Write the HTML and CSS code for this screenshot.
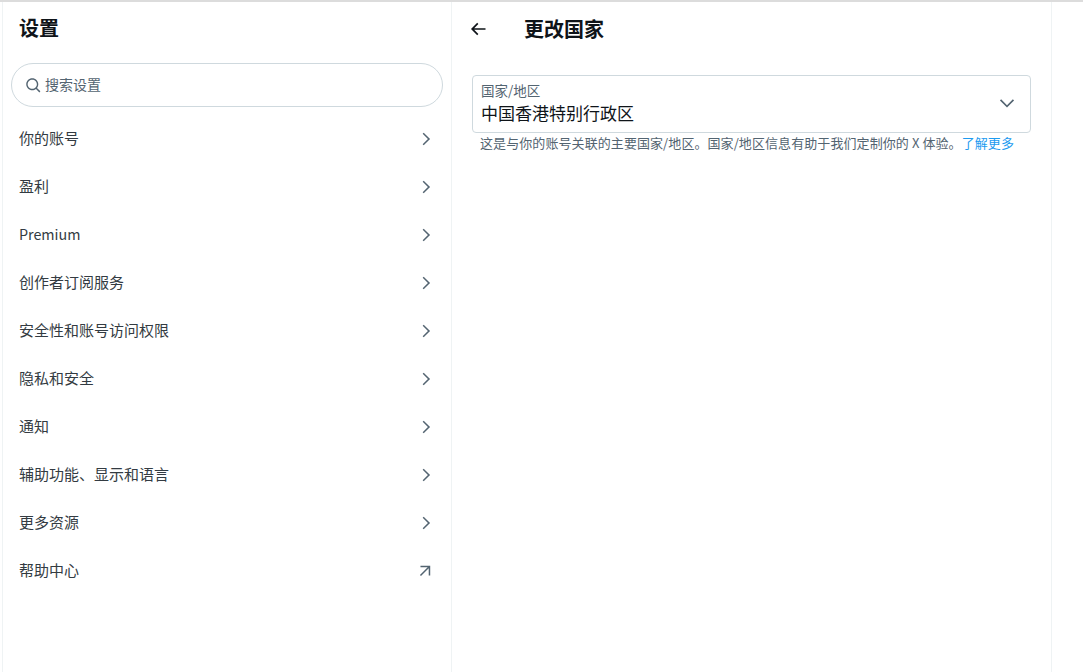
FILE: index.html
```html
<!DOCTYPE html>
<html lang="zh-CN">
<head>
    <meta charset="utf-8">
    <title>设置</title>
    <link rel="stylesheet" href="styles.css">
</head>
<body>
    <div class="layout">
        <aside class="sidebar">
            <h1 class="sidebar-title">设置</h1>
            <div class="search-box">
                <svg class="search-icon" viewBox="0 0 24 24"><path d="M10.25 3.75c-3.59 0-6.5 2.91-6.5 6.5s2.91 6.5 6.5 6.5c1.795 0 3.419-.726 4.596-1.904 1.178-1.177 1.904-2.801 1.904-4.596 0-3.59-2.91-6.5-6.5-6.5zm-8.5 6.5c0-4.694 3.806-8.5 8.5-8.5s8.5 3.806 8.5 8.5c0 1.986-.682 3.815-1.824 5.262l4.781 4.781-1.414 1.414-4.781-4.781c-1.447 1.142-3.276 1.824-5.262 1.824-4.694 0-8.5-3.806-8.5-8.5z"/></svg>
                <span class="search-text">搜索设置</span>
            </div>
            <nav class="menu">
                <div class="menu-row"><span class="menu-text">你的账号</span><svg class="menu-icon" viewBox="0 0 24 24"><path d="M14.586 12L7.543 4.96l1.414-1.42L17.414 12l-8.457 8.46-1.414-1.42L14.586 12z"/></svg></div>
                <div class="menu-row"><span class="menu-text">盈利</span><svg class="menu-icon" viewBox="0 0 24 24"><path d="M14.586 12L7.543 4.96l1.414-1.42L17.414 12l-8.457 8.46-1.414-1.42L14.586 12z"/></svg></div>
                <div class="menu-row"><span class="menu-text menu-text-latin">Premium</span><svg class="menu-icon" viewBox="0 0 24 24"><path d="M14.586 12L7.543 4.96l1.414-1.42L17.414 12l-8.457 8.46-1.414-1.42L14.586 12z"/></svg></div>
                <div class="menu-row"><span class="menu-text">创作者订阅服务</span><svg class="menu-icon" viewBox="0 0 24 24"><path d="M14.586 12L7.543 4.96l1.414-1.42L17.414 12l-8.457 8.46-1.414-1.42L14.586 12z"/></svg></div>
                <div class="menu-row"><span class="menu-text">安全性和账号访问权限</span><svg class="menu-icon" viewBox="0 0 24 24"><path d="M14.586 12L7.543 4.96l1.414-1.42L17.414 12l-8.457 8.46-1.414-1.42L14.586 12z"/></svg></div>
                <div class="menu-row"><span class="menu-text">隐私和安全</span><svg class="menu-icon" viewBox="0 0 24 24"><path d="M14.586 12L7.543 4.96l1.414-1.42L17.414 12l-8.457 8.46-1.414-1.42L14.586 12z"/></svg></div>
                <div class="menu-row"><span class="menu-text">通知</span><svg class="menu-icon" viewBox="0 0 24 24"><path d="M14.586 12L7.543 4.96l1.414-1.42L17.414 12l-8.457 8.46-1.414-1.42L14.586 12z"/></svg></div>
                <div class="menu-row"><span class="menu-text">辅助功能、显示和语言</span><svg class="menu-icon" viewBox="0 0 24 24"><path d="M14.586 12L7.543 4.96l1.414-1.42L17.414 12l-8.457 8.46-1.414-1.42L14.586 12z"/></svg></div>
                <div class="menu-row"><span class="menu-text">更多资源</span><svg class="menu-icon" viewBox="0 0 24 24"><path d="M14.586 12L7.543 4.96l1.414-1.42L17.414 12l-8.457 8.46-1.414-1.42L14.586 12z"/></svg></div>
                <div class="menu-row"><span class="menu-text">帮助中心</span><svg class="menu-icon menu-icon-out" viewBox="0 0 24 24"><path d="M5.959 5h13v13h-2V8.414L6.666 18.707l-1.414-1.414L15.545 7H5.959V5z"/></svg></div>
            </nav>
        </aside>
        <main class="detail">
            <header class="detail-header">
                <svg class="back-icon" viewBox="0 0 24 24"><path d="M7.414 13l5.043 5.04-1.414 1.42L3.586 12l7.457-7.46 1.414 1.42L7.414 11H21v2H7.414z"/></svg>
                <h2 class="detail-title">更改国家</h2>
            </header>
            <div class="country-select">
                <div class="select-text">
                    <div class="select-label">国家/地区</div>
                    <div class="select-value">中国香港特别行政区</div>
                </div>
                <svg class="select-icon" viewBox="0 0 24 24"><path d="M3.543 8.96l1.414-1.42L12 14.59l7.043-7.05 1.414 1.42L12 17.41 3.543 8.96z"/></svg>
            </div>
            <p class="help-text">这是与你的账号关联的主要国家/地区。国家/地区信息有助于我们定制你的 X 体验。<a class="help-link" href="#">了解更多</a></p>
        </main>
    </div>
</body>
</html>
```

FILE: styles.css
```css
html, body {
    height: 100%;
}

body {
    margin: 0;
    overflow: hidden;
    background-color: #fff;
    color: #0f1419;
    font-family: "Noto Sans CJK SC", "Open Sans", sans-serif;
    border-top: 2px solid #dcdcdc;
    box-sizing: border-box;
}

.layout {
    display: flex;
    height: 100%;
    padding-left: 2px;
}

.sidebar {
    width: 450px;
    box-sizing: border-box;
    border-left: 1px solid #eff3f4;
    border-right: 1px solid #eff3f4;
    flex-shrink: 0;
}

.sidebar-title {
    margin: 0;
    padding: 0 16px;
    height: 52px;
    line-height: 52px;
    font-size: 20px;
    font-weight: 700;
}

.search-box {
    display: flex;
    align-items: center;
    height: 42px;
    margin: 9px 8px 8px;
    padding-left: 13px;
    border: 1px solid #cfd9de;
    border-radius: 22px;
}

.search-icon {
    width: 17px;
    height: 17px;
    fill: #536471;
    margin-right: 3px;
}

.search-text {
    padding-bottom: 2px;
    font-size: 14px;
    color: #536471;
}

.menu-row {
    display: flex;
    align-items: center;
    justify-content: space-between;
    height: 48px;
    padding: 0 16px;
    font-size: 15px;
    color: #333b42;
}

.menu-text {
    padding-bottom: 4px;
}

.menu-text-latin {
    padding-bottom: 3px;
    font-size: 14.3px;
}

.menu-icon {
    width: 18px;
    height: 18px;
    fill: #536471;
}

.menu-icon-out {
    margin-right: 1px;
}

.detail {
    width: 600px;
    box-sizing: border-box;
    border-right: 1px solid #eff3f4;
    padding: 0 20px;
}

.detail-header {
    display: flex;
    align-items: center;
    height: 52px;
}

.back-icon {
    width: 20px;
    height: 20px;
    fill: #0f1419;
    margin-top: 2px;
    margin-left: -4px;
    margin-right: 36px;
}

.detail-title {
    margin: 0;
    font-size: 20px;
    font-weight: 700;
}

.country-select {
    display: flex;
    align-items: center;
    justify-content: space-between;
    height: 56px;
    margin-top: 21px;
    padding: 0 13px 0 8px;
    border: 1px solid #cfd9de;
    border-radius: 4px;
}

.select-text {
    padding-bottom: 1px;
}

.select-label {
    margin-bottom: 3px;
    font-size: 13.5px;
    line-height: 16px;
    color: #536471;
}

.select-value {
    font-size: 17px;
    line-height: 24px;
    color: #0f1419;
}

.select-icon {
    width: 20px;
    height: 20px;
    fill: #536471;
    margin-bottom: 2px;
}

.help-text {
    margin: 2px 0 0 8px;
    font-size: 13px;
    line-height: 16px;
    letter-spacing: 0.08px;
    color: #536471;
}

.help-link {
    color: #1d9bf0;
    text-decoration: none;
}
```
